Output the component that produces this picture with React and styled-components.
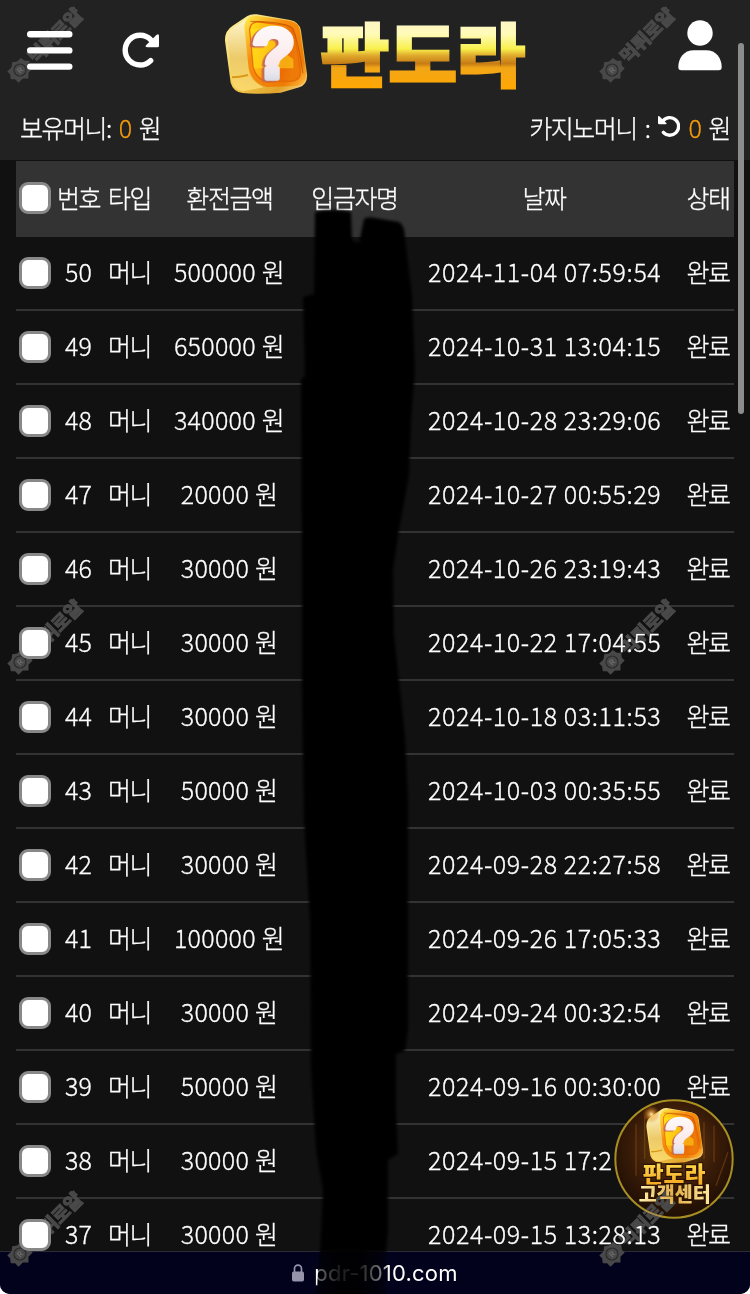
import React from 'react'
import styled, { createGlobalStyle, css } from "styled-components"

const rows = [
  { no: 50, amount: '500000', date: '2024-11-04 07:59:54' },
  { no: 49, amount: '650000', date: '2024-10-31 13:04:15' },
  { no: 48, amount: '340000', date: '2024-10-28 23:29:06' },
  { no: 47, amount: '20000', date: '2024-10-27 00:55:29' },
  { no: 46, amount: '30000', date: '2024-10-26 23:19:43' },
  { no: 45, amount: '30000', date: '2024-10-22 17:04:55' },
  { no: 44, amount: '30000', date: '2024-10-18 03:11:53' },
  { no: 43, amount: '50000', date: '2024-10-03 00:35:55' },
  { no: 42, amount: '30000', date: '2024-09-28 22:27:58' },
  { no: 41, amount: '100000', date: '2024-09-26 17:05:33' },
  { no: 40, amount: '30000', date: '2024-09-24 00:32:54' },
  { no: 39, amount: '50000', date: '2024-09-16 00:30:00' },
  { no: 38, amount: '30000', date: '2024-09-15 17:2' },
  { no: 37, amount: '30000', date: '2024-09-15 13:28:13' },
]

const marks = [[0, 0], [592, 0], [0, 592], [592, 592], [0, 1184], [592, 1184]]

const Cube = () => (
  <g>
    <path d="M45 122Q44 92 68 77L112 48Q123 41 140 43L240 60Q268 65 273 92L291 222Q294 252 268 262L212 278Q150 284 98 279Q70 276 62 248Z" fill="url(#side)" />
    <path d="M52 112Q60 88 84 74L118 52L112 100L118 215Q124 245 160 262L98 274Q72 270 66 244Z" fill="url(#sideLeft)" opacity="0.8" />
    <path d="M66 232Q88 232 114 225" stroke="#d99a18" strokeWidth="6" fill="none" />
    <path d="M103 82Q104 46 142 48L238 62Q266 66 270 92L288 220Q290 256 256 258L170 261Q126 250 116 206Z" fill="url(#face)" />
    <path d="M119 88Q122 64 148 66L228 76Q250 80 254 102L271 214Q273 240 248 243L172 246Q137 236 130 202Z" fill="url(#inner)" stroke="#e96a04" strokeWidth="4" />
    <path d="M121 64Q220 64 248 84Q264 120 279 220" stroke="#b94b00" strokeWidth="3" fill="none" opacity="0.7" />
    <path d="M120 88L180 80L200 140L250 178L250 205L131 205Z" fill="#ffe51c" opacity="0.5" />
    <Question x="191" y="234">?</Question>
  </g>
)

const LogoImage = () => (
  <Logo viewBox="0 0 990 330">
    <defs>
      <linearGradient id="side" x1="0" y1="0" x2="1" y2="1">
        <stop offset="0" stopColor="#fff4a8" />
        <stop offset="0.45" stopColor="#f2cf58" />
        <stop offset="0.8" stopColor="#e2a42a" />
        <stop offset="1" stopColor="#ffe6a0" />
      </linearGradient>
      <linearGradient id="sideLeft" x1="0" y1="0" x2="0" y2="1">
        <stop offset="0" stopColor="#fffbe0" />
        <stop offset="0.55" stopColor="#eac768" />
        <stop offset="1" stopColor="#ffdf73" />
      </linearGradient>
      <linearGradient id="face" x1="0" y1="0" x2="1" y2="1">
        <stop offset="0" stopColor="#fff04a" />
        <stop offset="0.35" stopColor="#f78d10" />
        <stop offset="0.8" stopColor="#ee7b04" />
        <stop offset="1" stopColor="#ffc548" />
      </linearGradient>
      <linearGradient id="inner" x1="0" y1="0" x2="1" y2="0.3">
        <stop offset="0" stopColor="#ffdf16" />
        <stop offset="0.4" stopColor="#ffb010" />
        <stop offset="0.8" stopColor="#ec6c06" />
        <stop offset="1" stopColor="#ee7a08" />
      </linearGradient>
      <linearGradient id="white" x1="0" y1="0" x2="0" y2="1">
        <stop offset="0" stopColor="#ffffff" />
        <stop offset="0.6" stopColor="#fbe9ea" />
        <stop offset="0.75" stopColor="#e8e6ee" />
        <stop offset="1" stopColor="#b9c6d8" />
      </linearGradient>
      <linearGradient id="gold" gradientUnits="userSpaceOnUse" x1="0" y1="66" x2="0" y2="268">
        <stop offset="0" stopColor="#fff6c4" />
        <stop offset="0.18" stopColor="#fffbb8" />
        <stop offset="0.4" stopColor="#f8f04c" />
        <stop offset="0.5" stopColor="#dfa82c" />
        <stop offset="0.62" stopColor="#c67c14" />
        <stop offset="0.68" stopColor="#f2a617" />
        <stop offset="1" stopColor="#ffa703" />
      </linearGradient>
    </defs>
    <Cube />
    <text x="332" y="244" fill="url(#gold)" stroke="url(#gold)" strokeWidth="9" fontSize="205" fontWeight="900" fontFamily="'Noto Sans CJK KR', sans-serif" textLength="612" lengthAdjust="spacingAndGlyphs">판도라</text>
  </Logo>
)

const Support = () => (
  <SupportBtn aria-label="고객센터">
    <svg width="120" height="120" viewBox="0 0 360 360">
      <defs>
        <radialGradient id="badge" cx="0.5" cy="0.4" r="0.6">
          <stop offset="0" stopColor="#6b4210" />
          <stop offset="0.6" stopColor="#3a1c08" />
          <stop offset="1" stopColor="#1d0e05" />
        </radialGradient>
        <linearGradient id="label" x1="0" y1="0" x2="0" y2="1">
          <stop offset="0" stopColor="#ffe75a" />
          <stop offset="1" stopColor="#f3a01b" />
        </linearGradient>
        <linearGradient id="label2" x1="0" y1="0" x2="1" y2="0">
          <stop offset="0" stopColor="#fff0b0" />
          <stop offset="0.5" stopColor="#e0ae48" />
          <stop offset="1" stopColor="#ffeaa0" />
        </linearGradient>
        <radialGradient id="spark">
          <stop offset="0" stopColor="#fff3c8" />
          <stop offset="0.3" stopColor="#ffb84a" stopOpacity="0.7" />
          <stop offset="1" stopColor="#c46a10" stopOpacity="0" />
        </radialGradient>
      </defs>
      <circle cx="180" cy="180" r="176" fill="url(#badge)" stroke="#a98f22" strokeWidth="6" />
      <g stroke="#a85a18" strokeWidth="4" opacity="0.4">
        <path d="M66 76V230M92 52V180M270 70V180M300 80V190M342 160L306 260" />
      </g>
      <g transform="translate(66 -2) scale(0.69)"><Cube /></g>
      <circle cx="112" cy="46" r="26" fill="url(#spark)" />
      <g fontFamily="'Noto Sans CJK KR', sans-serif" fontWeight="900" stroke="#2b1202" strokeWidth="7" paintOrder="stroke">
        <text x="86" y="250" fontSize="66" fill="url(#label)" textLength="188" lengthAdjust="spacingAndGlyphs">판도라</text>
        <text x="74" y="309" fontSize="60" fill="url(#label2)" textLength="216" lengthAdjust="spacingAndGlyphs">고객센터</text>
      </g>
    </svg>
  </SupportBtn>
)

const Watermark = ({ x, y }) => (
  <g transform={`translate(${x} ${y}) rotate(-45 20 70)`}>
    <path d="M20 59L24 62L29 62L30 67L33 70L30 74L30 78L24 78L20 82L16 78L10 78L10 73L7 70L10 66L10 62L16 62Z" fill="#484848" />
    <circle cx="20" cy="70" r="6" fill="none" stroke="#2b2b2b" strokeWidth="1.2" />
    <text x="17.4" y="73" fontSize="8" fontWeight="700" fill="#6a6a6a" fontFamily="Inter, sans-serif">R</text>
    <text x="35" y="77.5" fontSize="19" fontWeight="900" fill="#484848" stroke="#505050" strokeWidth="0.6" fontFamily="'Noto Sans CJK KR', sans-serif" textLength="68">먹튀로얄</text>
  </g>
)

const App = () => {
  return (
    <Page>
      <GlobalStyle />
      <Header>
        <TopBar>
          <LeftIcons>
            <svg width="46" height="40" viewBox="0 0 46 40" stroke="#fff" strokeWidth="6.4" strokeLinecap="round">
              <path d="M3.2 4.2H42.3M3.2 20.4H42.3M3.2 36.6H42.3" />
            </svg>
            <svg width="38" height="38" viewBox="0 0 38 38">
              <path d="M28.7 29.6A14.9 14.9 0 1 1 28.8 8.8" fill="none" stroke="#fff" strokeWidth="5.4" strokeLinecap="round" />
              <path d="M34.2 4.2Q37 1.8 37 5.4V14.8Q37 16.3 35.5 16.3H25.5Q22.2 16.3 24.5 13.8Z" fill="#fff" />
            </svg>
          </LeftIcons>
          <LogoImage />
          <svg width="44" height="52" viewBox="0 0 44 52" fill="#fff">
            <circle cx="22" cy="13" r="12.7" />
            <path d="M16 30.2H28C38 30.2 43.7 38 43.7 47Q43.7 50.3 40.7 50.3H3.3Q0.3 50.3 0.3 47C0.3 38 6 30.2 16 30.2Z" />
          </svg>
        </TopBar>
        <Balance>
          <Money>
            <span>보유머니:</span>
            <b>0</b>
            <span>원</span>
          </Money>
          <Money $casino>
            <span>카지노머니 :</span>
            <svg width="22" height="22" viewBox="0 0 22 22">
              <path d="M5.2 5.6A8.8 8.8 0 1 1 5.4 17.4" fill="none" stroke="#fff" strokeWidth="3.4" strokeLinecap="round" />
              <path d="M0 2.1Q0 0 1.6 1.5L8.3 8Q9.3 9.3 7.6 9.3H1.2Q0 9.3 0 8.1Z" fill="#fff" />
            </svg>
            <b>0</b>
            <span>원</span>
          </Money>
        </Balance>
      </Header>
      <Main>
        <Row $head>
          <Check />
          <Cell>번호</Cell>
          <Cell>타입</Cell>
          <Cell>환전금액</Cell>
          <Cell>입금자명</Cell>
          <Cell>날짜</Cell>
          <Cell>상태</Cell>
        </Row>
        {rows.map((row) => (
          <Row key={row.no}>
            <Check />
            <Cell $gap={0.1}>{row.no}</Cell>
            <Cell>머니</Cell>
            <Cell $gap={0.3}>{row.amount} 원</Cell>
            <Cell />
            <DateCell>{row.date}</DateCell>
            <Cell>완료</Cell>
          </Row>
        ))}
      </Main>
      <AddressBar>
        <svg width="12" height="18" viewBox="0 0 12 18">
          <path d="M2.5 8V4.6a3.5 3.5 0 0 1 7 0V8" fill="none" stroke="#9694aa" strokeWidth="1.7" />
          <rect y="7.5" width="12" height="10" rx="1.8" fill="#9694aa" />
        </svg>
        <span>pdr-1010.com</span>
      </AddressBar>
      <ScrollThumb />
      <Support />
      <Overlay $blend viewBox="0 0 750 1294">
        {marks.map(([x, y]) => <Watermark key={`${x}-${y}`} x={x} y={y} />)}
      </Overlay>
      {/* marker stroke over the name column */}
      <Overlay viewBox="0 0 750 1294">
        <defs>
          <filter id="soft"><feGaussianBlur stdDeviation="1.4" /></filter>
          <linearGradient id="fade" x1="0" y1="0" x2="1" y2="0">
            <stop offset="0" stopColor="#000" stopOpacity="0.55" />
            <stop offset="0.3" stopColor="#000" stopOpacity="0.88" />
            <stop offset="0.6" stopColor="#000" stopOpacity="0.88" />
            <stop offset="0.88" stopColor="#000" stopOpacity="0.5" />
            <stop offset="1" stopColor="#000" stopOpacity="0" />
          </linearGradient>
        </defs>
        <path filter="url(#soft)" d="M315 212Q333 208 351 212L352 240L359 243L364 219Q367 216 375 218L399 222Q405 226 405 238L412 295L415 370L411 420L409 475L399 530L393 570L394 635L400 690L405 735L408 800L408 960L408 1030L405 1051L396 1054L396 1110L398 1154L388 1160L388 1230L386 1252L320 1252L323 1190L316 1150L311 1070L310 920L304 820L302 690L302 560L301 380L305 375L303 297L314 294Z" fill="#000" />
        <path d="M320 1251H387L390 1294H316Z" fill="url(#fade)" />
      </Overlay>
    </Page>
  );
};

const GlobalStyle = createGlobalStyle`
  body {
    margin: 0;
    background: #fff;
  }

  * {
    box-sizing: border-box;
  }
`

const Page = styled.div`
  position: relative;
  display: flex;
  flex-direction: column;
  width: 750px;
  height: 1294px;
  overflow: hidden;
  border-radius: 0 0 10px 10px;
  background-color: #111;
  color: #fff;
  font-family: 'Noto Sans CJK KR', sans-serif;
  font-size: 25px;
  font-weight: 300;
  -webkit-text-stroke: 0.3px currentColor;
`

const Header = styled.header`
  height: 160px;
  flex-shrink: 0;
  background-color: #222;
`

const TopBar = styled.div`
  height: 110px;
  padding: 0 28px 0 27px;
  display: grid;
  grid-template-columns: 183px 330px 1fr;
  align-items: start;

  & > svg:last-child {
    justify-self: end;
    margin-top: 20px;
  }
`

const LeftIcons = styled.div`
  display: flex;
  align-items: center;
  gap: 49px;
  padding-top: 30px;
`

const Logo = styled.svg`
  width: 330px;
  height: 110px;
  overflow: visible;
  -webkit-text-stroke: 0;
`

const Question = styled.text`
  font-family: 'Liberation Sans', sans-serif;
  font-size: 212px;
  font-weight: 700;
  text-anchor: middle;
  fill: url(#white);
  stroke: url(#white);
  stroke-width: 16px;
  stroke-linejoin: round;
  filter: drop-shadow(-8px 4px 0 #c76a50);
`

const Balance = styled.div`
  height: 34px;
  padding: 0 20px;
  display: flex;
  justify-content: space-between;
  align-items: center;
  line-height: 34px;
`

const Money = styled.div`
  display: flex;
  align-items: center;
  gap: 8px;
  letter-spacing: -1.5px;

  & b {
    color: #f59b0a;
    font-weight: 300;
  }

  & svg {
    margin-top: -2px;
    margin-right: 1px;
  }

  ${({ $casino }) => $casino && css`
    word-spacing: 4px;
  `}
`

const Main = styled.main`
  flex: 1;
  min-height: 0;
  overflow: hidden;
  padding: 1px 16px 0;
`

const Cell = styled.div`
  text-align: center;
  white-space: nowrap;
  line-height: 36px;
  padding: 0 1px 4px 0;
  letter-spacing: ${({ $gap }) => $gap || -1.4}px;
`

const Row = styled.div`
  height: 74px;
  display: grid;
  grid-template-columns: 38px 50px 52px 148px 102px 277px 51px;
  align-items: center;
  border-bottom: 2px solid #333;

  ${({ $head }) => $head && css`
    height: 76px;
    background-color: #333;

    & ${Cell} {
      padding-bottom: 2px;
    }
  `}
`

const DateCell = styled(Cell)`
  padding-left: 22px;
  text-align: left;
  letter-spacing: 0.6px;
`

const Check = styled.div`
  width: 32px;
  height: 32px;
  justify-self: center;
  border: 3px solid #888;
  border-radius: 9px;
  background-color: #fff;
`

const AddressBar = styled.footer`
  height: 43px;
  display: flex;
  justify-content: center;
  align-items: center;
  gap: 10px;
  border-top: 1px solid #2b2b38;
  background-color: #03021c;
  font-family: Inter, sans-serif;
  font-size: 22px;
  font-weight: 400;
  letter-spacing: 0.2px;
  -webkit-text-stroke: 0;
`

const ScrollThumb = styled.div`
  position: absolute;
  top: 43px;
  right: 6px;
  width: 6px;
  height: 371px;
  border-radius: 3px;
  background-color: #8c8c8c;
`

const SupportBtn = styled.button`
  position: absolute;
  right: 16px;
  bottom: 75px;
  width: 120px;
  height: 120px;
  padding: 0;
  border: none;
  border-radius: 50%;
  background: none;
  -webkit-text-stroke: 0;
`

const Overlay = styled.svg`
  position: absolute;
  inset: 0;
  width: 750px;
  height: 1294px;
  pointer-events: none;
  -webkit-text-stroke: 0;
  mix-blend-mode: ${({ $blend }) => ($blend ? 'lighten' : 'normal')};
`

export default App;
